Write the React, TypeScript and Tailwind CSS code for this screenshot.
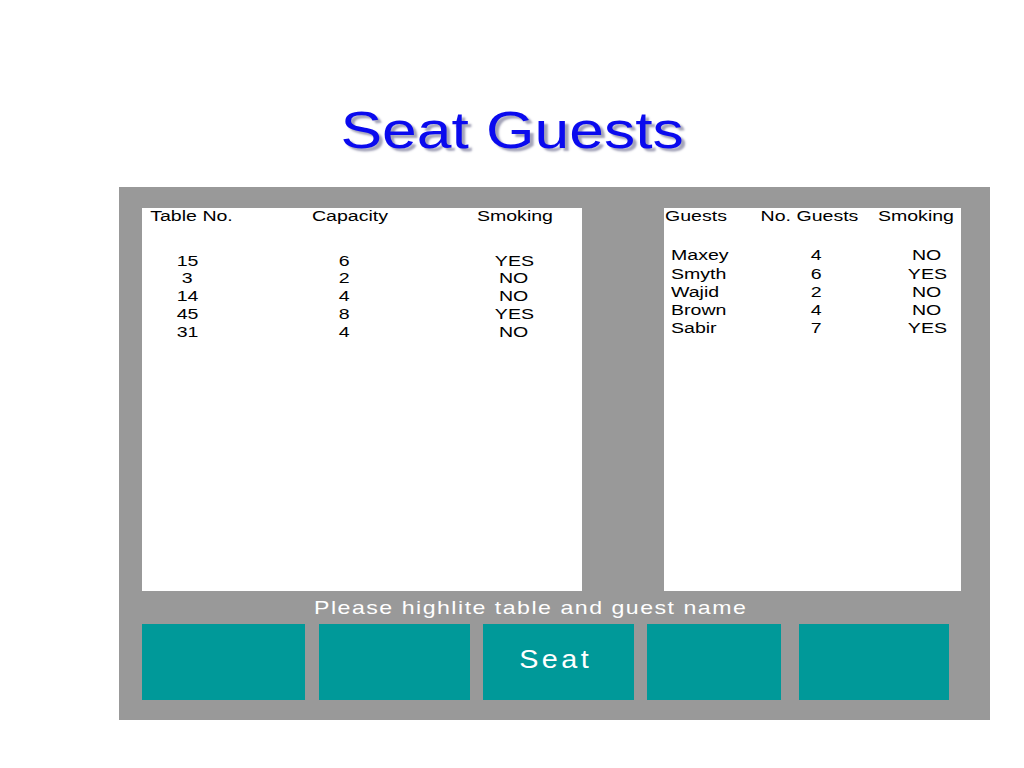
import React from "react";

const S = ({ children, left }: { children: React.ReactNode; left?: boolean }) => (
  <span
    className={
      "inline-block whitespace-pre [transform:scaleX(1.27)] " +
      (left ? "origin-left" : "origin-center")
    }
  >
    {children}
  </span>
);

const tables = [
  ["15", "6", "YES"],
  ["3", "2", "NO"],
  ["14", "4", "NO"],
  ["45", "8", "YES"],
  ["31", "4", "NO"],
];

const guests = [
  ["Maxey", "4", "NO"],
  ["Smyth", "6", "YES"],
  ["Wajid", "2", "NO"],
  ["Brown", "4", "NO"],
  ["Sabir", "7", "YES"],
];

export default function App() {
  return (
    <div className="w-[1024px] h-[768px] bg-white font-['Liberation_Sans',Arial,sans-serif] overflow-hidden">
      {/* Title */}
      <div className="pt-[104px] flex justify-center">
        <h1 className="text-[52px] leading-[52px] text-[#0a0aee] [text-shadow:3px_3px_2px_#a3a3b8]">
          <span className="inline-block [transform:scaleX(1.2)]">Seat Guests</span>
        </h1>
      </div>

      {/* Gray panel */}
      <div className="mt-[31px] ml-[119px] w-[871px] h-[533px] bg-[#999999] pt-[21px] flex flex-col">
        <div className="flex">
          {/* Left table panel */}
          <div className="ml-[23px] w-[440px] h-[383px] bg-white flex text-[15.4px] text-black">
            <div className="flex flex-col items-center w-[100px] -mt-px">
              <div className="leading-[18px]"><S>Table No.</S></div>
              <div className="mt-[26.6px] flex flex-col items-center pr-[9px]">
                {tables.map((r, i) => (
                  <div key={i} className="leading-[17.75px]"><S>{r[0]}</S></div>
                ))}
              </div>
            </div>
            <div className="flex flex-col items-center w-[100px] ml-[57.5px] -mt-px">
              <div className="leading-[18px]"><S>Capacity</S></div>
              <div className="mt-[26.6px] flex flex-col items-center pr-[10px]">
                {tables.map((r, i) => (
                  <div key={i} className="leading-[17.75px]"><S>{r[1]}</S></div>
                ))}
              </div>
            </div>
            <div className="flex flex-col items-center w-[100px] ml-[65.5px] -mt-px">
              <div className="leading-[18px]"><S>Smoking</S></div>
              <div className="mt-[26.6px] flex flex-col items-center pr-[2px]">
                {tables.map((r, i) => (
                  <div key={i} className="leading-[17.75px]"><S>{r[2]}</S></div>
                ))}
              </div>
            </div>
          </div>

          {/* Right guests panel */}
          <div className="ml-[82px] w-[297px] h-[383px] bg-white flex text-[15.4px] text-black">
            <div className="flex flex-col items-start w-[100px] pl-px -mt-px">
              <div className="leading-[18px]"><S left>Guests</S></div>
              <div className="mt-[21.3px] flex flex-col items-start pl-[6px]">
                {guests.map((r, i) => (
                  <div key={i} className="leading-[18.25px]"><S left>{r[0]}</S></div>
                ))}
              </div>
            </div>
            <div className="flex flex-col items-center w-[90px] -mt-px">
              <div className="leading-[18px]"><S>No. Guests</S></div>
              <div className="mt-[21.3px] flex flex-col items-center pl-[14px]">
                {guests.map((r, i) => (
                  <div key={i} className="leading-[18.25px]"><S>{r[1]}</S></div>
                ))}
              </div>
            </div>
            <div className="flex flex-col items-center w-[90px] ml-[16.5px] -mt-px">
              <div className="leading-[18px]"><S>Smoking</S></div>
              <div className="mt-[21.3px] flex flex-col items-center pl-[23px]">
                {guests.map((r, i) => (
                  <div key={i} className="leading-[18.25px]"><S>{r[2]}</S></div>
                ))}
              </div>
            </div>
          </div>
        </div>

        {/* Instruction */}
        <div className="mt-[6px] h-[22px] pl-[195px] text-[18.5px] leading-[22px] text-white">
          <span className="inline-block whitespace-pre origin-left [transform:scaleX(1.25)] tracking-[1.2px]">
            Please highlite table and guest name
          </span>
        </div>

        {/* Buttons */}
        <div className="mt-[5px] ml-[23px] flex h-[76px]">
          <div className="w-[163px] bg-[#009999]" />
          <div className="ml-[14px] w-[151px] bg-[#009999]" />
          <div className="ml-[13px] w-[151px] bg-[#009999] flex justify-center items-start pt-[21px] pr-[6px]">
            <span className="inline-block text-[25px] leading-[28px] text-white [transform:scaleX(1.15)] tracking-[3px]">
              Seat
            </span>
          </div>
          <div className="ml-[13px] w-[134px] bg-[#009999]" />
          <div className="ml-[18px] w-[150px] bg-[#009999]" />
        </div>
      </div>
    </div>
  );
}
